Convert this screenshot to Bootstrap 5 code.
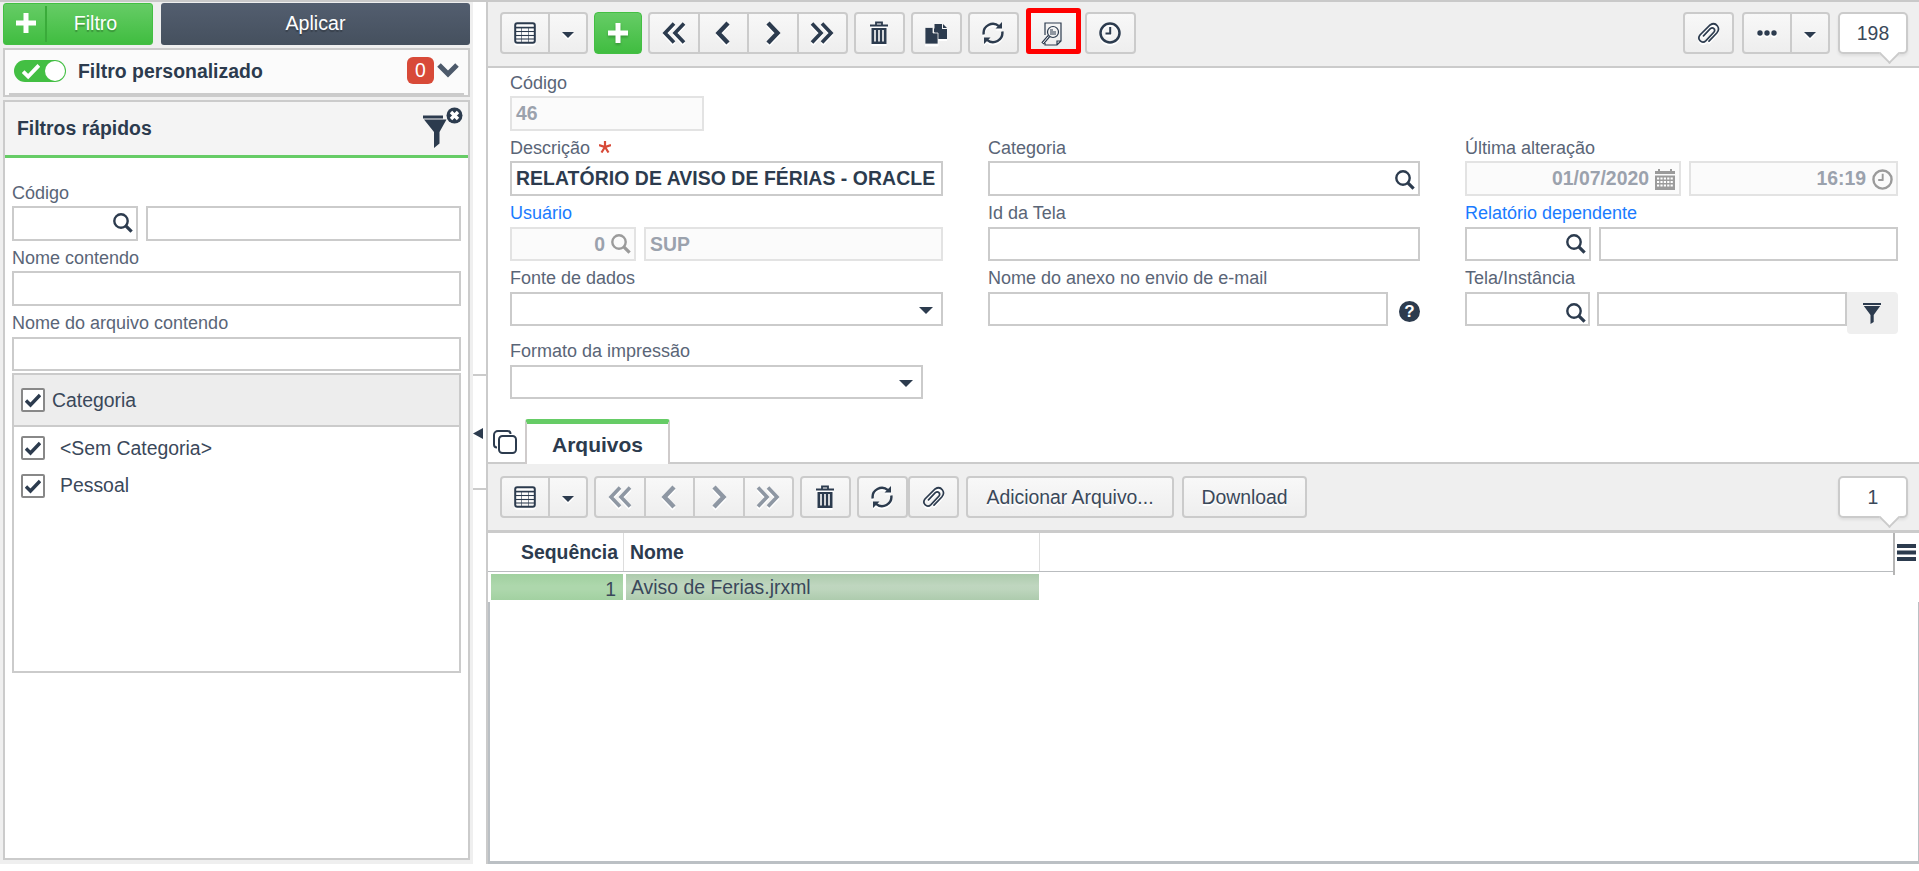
<!DOCTYPE html>
<html lang="pt-BR">
<head>
<meta charset="utf-8">
<title>Relatórios</title>
<link href="https://cdn.jsdelivr.net/npm/bootstrap@5.3.0/dist/css/bootstrap.min.css" rel="stylesheet">
<style>
:root{--ink:#2c3b4e;--line:#cbcbcb}
body{font:19.4px/24px "Liberation Sans",Arial,sans-serif;color:var(--ink);background:#fff;height:871px;overflow:hidden}
svg{display:block;flex:none;fill:none;stroke:currentColor}
.app{height:864px;border-top:2px solid #c9c9c9}
.side{width:473px;background:#efefef;padding:1px 3px 4px}
.main-pane{border-left:2px solid var(--line);min-width:0}
.gutter{width:13px;padding-top:372px}
.handle{height:116px;border-top:2px solid var(--line);border-bottom:2px solid var(--line);padding-top:2px}
.big-btn{height:42px;border:0;border-radius:3px;color:#fff;text-shadow:0 2px 1px rgba(0,0,0,.25);font-size:19.6px;line-height:41px}
.green{background:linear-gradient(#66cc66,#40bd40);border:1px solid #43bf43;color:#fff}
.big-btn.green{line-height:39px}
.dark-btn{background:linear-gradient(#535e6f,#45505e)}
.plus-part{width:43px;border-right:2px solid #3aab3a;height:36px;margin-top:2px;padding:6px 0 0 11px}
.panel{border:2px solid var(--line);background:#fff}
.custom-f{height:49px;background:#fbfbfb;margin-top:3px;padding:0 4px}
.custom-f .inner{height:45px;border-bottom:2px solid var(--line);padding:0 0 2px 5px}
.toggle{width:52px;height:22px;border-radius:11px;background:#43bf43;padding:1px 1px 1px 8px}
.knob{width:20px;height:20px;border-radius:50%;background:#fff}
.cnt{width:27px;height:27px;border-radius:6px;background:#d84a38;color:#fff;line-height:26px}
.quick{margin-top:3px}
.quick-h{height:56px;background:#f4f4f4;border-bottom:3px solid #66cc66;padding:0 4px 1px 12px}
.quick-b{padding:23px 7px 0}
.lb{display:block;font-size:18px;line-height:24px;color:#5a6577;height:26px;white-space:nowrap}
.lb.s{height:25px}
.lb.link{color:#1a7bff}
.inp{border:2px solid var(--line);background:#fff;height:34px;line-height:30px;font-weight:bold;padding:0 3px 0 4px;display:flex;white-space:nowrap;overflow:hidden}
.inp.s{height:35px;line-height:31px}
.inp.dis{background:#fbfbfb;border-color:#e3e3e3;color:#9ba2ad}
.inp.dis svg{color:#9b9b9b}
.inp svg{margin-left:auto;margin-top:5px}
.inp .val{margin-left:auto}
.inp .val + svg{margin-left:6px}
.cat{border:2px solid var(--line);height:300px;margin-top:2px}
.cat-h{height:52px;background:#ededed;border-bottom:2px solid var(--line);padding:13px 7px 0}
.cat-t{color:#3a485a;padding-left:7px}
.cat-i{color:#3a485a;padding-left:15px}
.chk{width:24px;height:24px;border:2px solid #888;border-radius:2px;background:#fff;flex:none;padding:2px}
.tbar{background:#efefef;height:66px;padding:10px 11px 0 12px;border-bottom:2px solid var(--line)}
.tb{height:42px;border:2px solid var(--line);border-radius:4px;background:linear-gradient(#f8f8f8,#eee);display:flex;flex:none}
.tb>span{flex:1 1 0;display:flex;align-items:center;justify-content:center}
.tb>span+span{border-left:2px solid var(--line)}
.tb svg{filter:drop-shadow(0 2px 0 #fff)}
.w51{width:51px}.w88{width:88px}.w200{width:200px}
.tb.w88>span:first-child{flex:0 0 46px}
.off svg{color:#8e97a3}
.hot{width:55px;height:46px;margin:-4px 4px 0 7px;border:5px solid #f00;border-radius:3px;background:linear-gradient(#f8f8f8,#eee);padding:9px 0 0 10px}
.bub{position:relative;width:70px;height:42px;border:2px solid var(--line);border-radius:5px;background:#fff;color:#3a485a;text-align:center;line-height:38px;box-shadow:0 2px 3px rgba(0,0,0,.07)}
.bub:after{content:"";position:absolute;right:9px;bottom:-9px;width:15px;height:15px;background:#fff;border:solid var(--line);border-width:0 2px 2px 0;transform:rotate(45deg)}
.form-a{height:351px;padding:3px 20px 0 22px}
.cols{display:grid;grid-template-columns:433px 432px 433px;column-gap:45px;grid-template-rows:65px 65px 65px 73px 60px}
.flt{width:51px;height:42px;background:#efefef;border-radius:0 4px 4px 4px;padding:11px 16px}
.help{width:21px;height:21px;border-radius:50%;background:var(--ink);color:#fff;font-weight:bold;font-size:17px;line-height:21px;text-align:center;margin:9px 0 0 11px}
.tabs{height:45px;border-bottom:2px solid var(--line);padding-left:5px}
.tabx{width:145px;height:45px;border:solid #cfcbcb;border-width:0 2px;border-top:5px solid #66cc66;border-radius:3px 3px 0 0;background:#fff;font-weight:bold;font-size:21px;text-align:center;line-height:42px}
.lbl-btn{color:#3a485a;text-shadow:0 2px 0 #fff}
.gh{height:39px;border-bottom:1px solid #b9bcbf;font-weight:bold;line-height:38px;padding-left:1px;flex:1}
.gh div+div{border-left:1px solid #ddd}
.gmenu{width:26px;height:42px;border-left:2px solid #b5b5b5;padding:11px 0 0 2px}
.cell-a{width:132px;height:26px;background:linear-gradient(#a0d09f,#add7ac 45%,#add7ac 60%,#a2d1a1);color:#3a485a;text-align:right;padding-right:7px;line-height:30px}
.cell-b{width:413px;height:26px;background:linear-gradient(#adcbad,#bfd6bf 45%,#bdd5bd 60%,#adcbad);color:#3a485a;padding-left:5px;line-height:27px}
.gb{border:solid #bbc0c4;border-width:0 1px 3px 2px;margin-top:27px}
</style>
</head>
<body>
<svg width="0" height="0" class="position-absolute">
<symbol id="search" viewBox="0 0 20 20"><circle cx="8" cy="8" r="6.7" stroke-width="2.4"/><path d="M12.6 12.6 18.6 18.6" stroke-width="3.2"/></symbol>
<symbol id="tbl" viewBox="0 0 22 22"><rect x="1.2" y="1.2" width="19.6" height="19.6" rx="2" stroke-width="2"/><path d="M1 5.6H21" stroke-width="1.600"/><path d="M1 9.5H21M1 13.5H21M1 17H21" stroke-width="1"/><path d="M7.5 6V21M14.5 6V21" stroke-width="1" opacity=".6"/></symbol>
<symbol id="car" viewBox="0 0 12 6"><path d="M0 0H12L6 6Z" fill="currentColor" stroke="none"/></symbol>
<symbol id="c1" viewBox="0 0 24 24"><path d="M17 2 7.500 12 17 22" stroke-width="4.400"/></symbol>
<symbol id="c2" viewBox="0 0 24 24"><path d="M12 2.500 3 12 12 21.500M22 2.500 13 12 22 21.500" stroke-width="3.600"/></symbol>
<symbol id="trash" viewBox="0 0 18 24"><path d="M6 4V1.500H12V4" stroke-width="1.800"/><path d="M0 4.500H18" stroke-width="2"/><path d="M1.500 7H16.500V23H1.500Z" fill="currentColor" stroke="none"/><path d="M5 9V20.500M9 9V20.500M13 9V20.500" stroke="#f3f3f3" stroke-width="1.700"/></symbol>
<symbol id="copy" viewBox="0 0 22 22"><g fill="currentColor" stroke="none"><path d="M9.500 1H17V6H22V16H9.500Z"/><path d="M18 1 22 5H18Z"/><path d="M0 4.500H8V10H13V21H0Z" stroke="#f3f3f3" stroke-width=".8"/><path d="M9 5 13 9H9Z"/></g></symbol>
<symbol id="ref" viewBox="0 0 22 22"><path d="M1.700 12.500A9.300 9.300 0 0 1 17 4.200M20.300 9.500A9.300 9.300 0 0 1 5 17.800" stroke-width="2.400"/><path d="M13.500 6.500H20V0ZM8.500 15.500H2V22Z" fill="currentColor" stroke="none"/></symbol>
<symbol id="clk" viewBox="0 0 22 22"><circle cx="11" cy="11" r="9.500" stroke-width="2.500"/><path d="M11.200 5V12M6.500 11.500H12" stroke-width="2"/></symbol>
<symbol id="clip" viewBox="0 0 22 22"><path d="M11.500 19.200 19.300 11C23.500 6 18.500-.8 12.600 3L2.500 13C-.8 17.500 4.500 22.500 8.500 18.600L16.300 10.300C18.500 7.300 15.500 4.500 12.800 6.600L6 13.800" stroke-width="1.700" stroke-linecap="round"/></symbol>
<symbol id="plus" viewBox="0 0 22 22"><path d="M11 1V21M1 11H21" stroke-width="5"/></symbol>
<symbol id="tick" viewBox="0 0 16 16"><path d="M1 8.500 5.500 13 15 3" stroke-width="3.400"/></symbol>
<symbol id="fun" viewBox="0 0 18 21"><path d="M0 0H18V2H0ZM.8 3H17.200L10.700 12V19L7.500 21V12Z" fill="currentColor" stroke="none"/></symbol>
</svg>
<div class="app d-flex">
  <aside class="side d-flex flex-column">
    <div class="d-flex gap-2">
      <div class="big-btn green d-flex" style="width:150px"><div class="plus-part"><svg width="22" height="22"><use href="#plus"/></svg></div><div class="flex-fill text-center" style="padding-right:8px">Filtro</div></div>
      <div class="big-btn dark-btn flex-fill text-center">Aplicar</div>
    </div>
    <div class="panel custom-f"><div class="inner d-flex align-items-center">
      <div class="toggle d-flex justify-content-between"><svg width="18" height="20" class="text-white" viewBox="0 0 16 16"><use href="#tick"/></svg><span class="knob"></span></div>
      <strong class="ms-2 ps-1" style="letter-spacing:.03px">Filtro personalizado</strong>
      <span class="cnt text-center ms-auto">0</span>
      <svg width="22" height="16" viewBox="0 0 22 16" style="color:#4d5a6b;margin:0 5px 2px 3px"><path d="M2 3 11 12 20 3" stroke-width="5"/></svg>
    </div></div>
    <div class="panel flex-fill quick">
      <div class="quick-h d-flex align-items-center"><strong>Filtros rápidos</strong>
        <svg class="ms-auto" width="42" height="44" viewBox="0 0 42 44"><path d="M1 9.500H21V12.500H1ZM2 13.500H24.500L17.500 26V37.500L12 42V26Z" fill="currentColor" stroke="none"/><circle cx="32.500" cy="9.500" r="8" fill="currentColor" stroke="none"/><path d="M29 6 36 13M36 6 29 13" stroke="#fff" stroke-width="3.400"/></svg></div>
      <div class="quick-b">
        <label class="lb s">Código</label>
        <div class="d-flex gap-2" style="height:40px"><div class="inp s" style="width:126px"><svg width="20" height="20"><use href="#search"/></svg></div><div class="inp s flex-fill"></div></div>
        <label class="lb s">Nome contendo</label><div class="inp s"></div>
        <label class="lb" style="margin-top:5px">Nome do arquivo contendo</label><div class="inp"></div>
        <div class="cat">
          <div class="cat-h d-flex"><span class="chk"><svg width="16" height="16"><use href="#tick"/></svg></span><span class="cat-t">Categoria</span></div>
          <div class="d-flex" style="margin:9px 7px 0"><span class="chk"><svg width="16" height="16"><use href="#tick"/></svg></span><span class="cat-i">&lt;Sem Categoria&gt;</span></div>
          <div class="d-flex" style="margin:14px 7px 0"><span class="chk"><svg width="16" height="16"><use href="#tick"/></svg></span><span class="cat-i" style="margin-top:-1px">Pessoal</span></div>
        </div>
      </div>
    </div>
  </aside>
  <div class="gutter"><div class="handle d-flex align-items-center"><svg width="10" height="11" viewBox="0 0 10 11"><path d="M10 0V11L0 5.500Z" fill="currentColor" stroke="none"/></svg></div></div>
  <main class="main-pane flex-fill d-flex flex-column">
    <div class="tbar d-flex">
      <div class="tb w88"><span><svg width="22" height="22"><use href="#tbl"/></svg></span><span><svg width="12" height="6" class="mt-1"><use href="#car"/></svg></span></div>
      <div class="tb green" style="width:48px;margin:0 6px;background:linear-gradient(#66cc66,#40bd40);border:1px solid #43bf43"><span><svg width="22" height="22" style="filter:drop-shadow(0 2px 1px #3a9a3a)"><use href="#plus"/></svg></span></div>
      <div class="tb w200"><span><svg width="24" height="24"><use href="#c2"/></svg></span><span><svg width="24" height="24"><use href="#c1"/></svg></span><span><svg width="24" height="24" viewBox="0 0 24 24"><path d="M7 2 16.500 12 7 22" stroke-width="4.400"/></svg></span><span><svg width="24" height="24" viewBox="0 0 24 24"><path d="M12 2.500 21 12 12 21.500M2 2.500 11 12 2 21.500" stroke-width="3.600"/></svg></span></div>
      <div class="tb w51" style="margin-left:6px"><span><svg width="18" height="24" style="margin-right:1px"><use href="#trash"/></svg></span></div>
      <div class="tb w51" style="margin-left:6px"><span><svg width="22" height="22" style="margin:2px 1px 0 0"><use href="#copy"/></svg></span></div>
      <div class="tb w51" style="margin-left:6px"><span><svg width="22" height="22" style="margin-right:1px"><use href="#ref"/></svg></span></div>
      <div class="hot"><svg width="22" height="24" viewBox="0 0 22 24" stroke-width="1.200"><path d="M4 13V1H20V19L16 23H4V21M20 19H16V23"/><circle cx="12" cy="10" r="5.500"/><path d="M9 8H12M9 10H15M9 12H15" stroke-width="1.200"/><path d="M8 14 1.500 21.500" stroke-width="3.200"/><path d="M7.500 14.500 2 21" stroke="#fff" stroke-width="1"/></svg></div>
      <div class="tb w51"><span><svg width="22" height="22" style="margin-right:1px"><use href="#clk"/></svg></span></div>
      <div class="tb w51 ms-auto"><span><svg width="23" height="22"><use href="#clip"/></svg></span></div>
      <div class="tb w88 mx-2"><span><svg width="20" height="6" viewBox="0 0 20 6"><g fill="currentColor" stroke="none"><circle cx="3" cy="3" r="2.700"/><circle cx="10" cy="3" r="2.700"/><circle cx="17" cy="3" r="2.700"/></g></svg></span><span><svg width="12" height="6" class="mt-1"><use href="#car"/></svg></span></div>
      <div class="bub">198</div>
    </div>
    <div class="form-a"><div class="cols">
      <div><label class="lb s">Código</label><div class="inp s dis" style="width:194px">46</div></div><div></div><div></div>
      <div><label class="lb s d-flex">Descrição<svg width="12" height="12" viewBox="0 0 12 12" style="color:#d84a38;margin:5px 0 0 9px"><path d="M6 0V6M0 4 6 6 12 4M2.500 11.500 6 6 9.500 11.500" stroke-width="2.200"/></svg></label><div class="inp s" style="letter-spacing:.07px">RELATÓRIO DE AVISO DE FÉRIAS - ORACLE</div></div>
      <div><label class="lb s">Categoria</label><div class="inp s"><svg width="20" height="20" style="margin-top:7px"><use href="#search"/></svg></div></div>
      <div><label class="lb s">Última alteração</label><div class="d-flex gap-2"><div class="inp s dis" style="width:216px"><span class="val">01/07/2020</span><svg width="20" height="21" viewBox="0 0 20 21" style="margin:6px 1px 0 6px"><g fill="currentColor" stroke="none"><path d="M3 0H5V5H3ZM15 0H17V5H15ZM0 2H20V5H0ZM0 6.500H20V21H0Z"/></g><path d="M2 9.500H18M2 13H18M2 16.500H18" stroke="#fff" stroke-width="2.200" stroke-dasharray="2.200 1.200"/></svg></div><div class="inp s dis flex-fill"><span class="val">16:19</span><svg width="21" height="21" style="margin:6px 0 0 6px"><use href="#clk"/></svg></div></div></div>
      <div><label class="lb link">Usuário</label><div class="d-flex gap-2"><div class="inp dis" style="width:126px"><span class="val">0</span><svg width="20" height="20"><use href="#search"/></svg></div><div class="inp dis flex-fill">SUP</div></div></div>
      <div><label class="lb">Id da Tela</label><div class="inp"></div></div>
      <div><label class="lb link">Relatório dependente</label><div class="d-flex gap-2"><div class="inp" style="width:126px"><svg width="20" height="20"><use href="#search"/></svg></div><div class="inp flex-fill"></div></div></div>
      <div><label class="lb">Fonte de dados</label><div class="inp"><svg width="14" height="7" viewBox="0 0 12 6" preserveAspectRatio="none" style="margin:13px 5px 0 auto"><use href="#car"/></svg></div></div>
      <div><label class="lb">Nome do anexo no envio de e-mail</label><div class="d-flex"><div class="inp" style="width:401px"></div><span class="help">?</span></div></div>
      <div><label class="lb">Tela/Instância</label><div class="d-flex"><div class="inp" style="width:125px;padding-right:2px"><svg width="20" height="20" style="margin-top:9px"><use href="#search"/></svg></div><div class="inp" style="width:250px;margin-left:7px"></div><div class="flt"><svg width="18" height="21"><use href="#fun"/></svg></div></div></div>
      <div><label class="lb">Formato da impressão</label><div class="inp" style="width:413px"><svg width="14" height="7" viewBox="0 0 12 6" preserveAspectRatio="none" style="margin:13px 5px 0 auto"><use href="#car"/></svg></div></div>
    </div></div>
    <div class="tabs d-flex"><svg width="24" height="24" viewBox="0 0 24 24" style="margin:11px 8px 0 0" stroke-width="2"><rect x="6" y="6" width="17" height="17" rx="3.500"/><path d="M4 17.500A3 3 0 0 1 1 14.500V5A4 4 0 0 1 5 1H14.500A3 3 0 0 1 17.500 4"/></svg><div class="tabx">Arquivos</div></div>
    <div class="tbar d-flex" style="height:69px;padding-top:12px;border-bottom-width:3px">
      <div class="tb w88"><span><svg width="22" height="22"><use href="#tbl"/></svg></span><span><svg width="12" height="6" class="mt-1"><use href="#car"/></svg></span></div>
      <div class="tb w200 off" style="margin:0 6px"><span><svg width="24" height="24"><use href="#c2"/></svg></span><span><svg width="24" height="24"><use href="#c1"/></svg></span><span><svg width="24" height="24" viewBox="0 0 24 24"><path d="M7 2 16.500 12 7 22" stroke-width="4.400"/></svg></span><span><svg width="24" height="24" viewBox="0 0 24 24"><path d="M12 2.500 21 12 12 21.500M2 2.500 11 12 2 21.500" stroke-width="3.600"/></svg></span></div>
      <div class="tb w51"><span><svg width="18" height="24" style="margin-right:1px"><use href="#trash"/></svg></span></div>
      <div class="tb w51" style="margin-left:6px"><span><svg width="22" height="22" style="margin-right:1px"><use href="#ref"/></svg></span></div>
      <div class="tb w51"><span><svg width="23" height="22"><use href="#clip"/></svg></span></div>
      <div class="tb lbl-btn" style="width:208px;margin:0 8px 0 7px"><span>Adicionar Arquivo...</span></div>
      <div class="tb lbl-btn" style="width:125px"><span>Download</span></div>
      <div class="bub ms-auto">1</div>
    </div>
    <div class="d-flex" style="height:42px">
      <div class="flex-fill"><div class="gh d-flex"><div class="text-end" style="width:134px;padding-right:5px">Sequência</div><div style="width:416px;padding-left:6px">Nome</div><div></div></div>
        <div class="d-flex" style="margin:2px 0 0 3px"><div class="cell-a">1</div><div class="cell-b" style="margin-left:3px">Aviso de Ferias.jrxml</div></div></div>
      <div class="gmenu"><svg width="19" height="17" viewBox="0 0 19 17"><path d="M0 2H19M0 8.500H19M0 15H19" stroke-width="4"/></svg></div>
    </div>
    <div class="gb flex-fill"></div>
  </main>
</div>
<script src="https://cdn.jsdelivr.net/npm/bootstrap@5.3.0/dist/js/bootstrap.bundle.min.js"></script>
</body>
</html>
